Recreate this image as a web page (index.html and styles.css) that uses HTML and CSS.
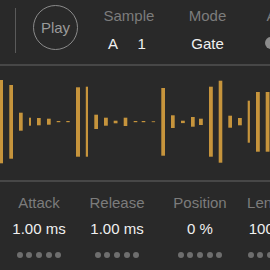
FILE: index.html
```html
<!DOCTYPE html>
<html>
<head>
<meta charset="utf-8">
<link rel="stylesheet" href="styles.css">
</head>
<body>
<div class="app">
  <header class="top">
    <div class="vline"></div>
    <button class="play">Play</button>
    <div class="param sample">
      <div class="label">Sample</div>
      <div class="value pair"><span>A</span><span>1</span></div>
    </div>
    <div class="param mode">
      <div class="label">Mode</div>
      <div class="value">Gate</div>
    </div>
    <div class="param active">
      <div class="label">Active</div>
      <div class="toggle"><span class="knob"></span></div>
    </div>
  </header>
  <div class="divider"></div>
  <svg class="wave" width="270" height="114" viewBox="0 66 270 114" xmlns="http://www.w3.org/2000/svg">
    <g fill="#c6943c">
      <rect x="0" y="80" width="3" height="83.3"/>
      <rect x="9.3" y="85" width="3.7" height="73.7"/>
      <rect x="19" y="112.7" width="3.7" height="18"/>
      <rect x="29" y="117.7" width="2" height="8"/>
      <rect x="37" y="118" width="3.7" height="7.3"/>
      <rect x="47" y="118.7" width="3.7" height="6"/>
      <rect x="56.7" y="121" width="3.6" height="1.2"/>
      <rect x="66.3" y="121" width="3.4" height="1.2"/>
      <rect x="76" y="87.3" width="4" height="69.4"/>
      <rect x="85.8" y="86.7" width="2.2" height="70"/>
      <rect x="94.3" y="114.7" width="3.7" height="14.3"/>
      <rect x="104" y="117.7" width="3.8" height="8"/>
      <rect x="113.7" y="120.7" width="3.8" height="2.6"/>
      <rect x="123.7" y="117.7" width="3.6" height="8.3"/>
      <rect x="133.7" y="121" width="3.6" height="1.2"/>
      <rect x="141.7" y="121" width="3.6" height="1.2"/>
      <rect x="151.7" y="121" width="3.4" height="1.2" opacity="0.7"/>
      <rect x="161.3" y="88" width="3.7" height="67.7"/>
      <rect x="171" y="115.3" width="3.7" height="12.7"/>
      <rect x="181" y="120.7" width="3.8" height="2.4"/>
      <rect x="191" y="117" width="3.7" height="9.7"/>
      <rect x="199" y="118.7" width="3.8" height="6.3"/>
      <rect x="209" y="86.7" width="3.8" height="70"/>
      <rect x="218.7" y="80.7" width="3.6" height="82"/>
      <rect x="228.3" y="115.7" width="3.7" height="12"/>
      <rect x="238" y="118" width="3.8" height="7.3"/>
      <rect x="247.7" y="100.7" width="2.2" height="42"/>
      <rect x="256" y="92" width="3.8" height="59.7"/>
      <rect x="265.7" y="92" width="3.8" height="59.7"/>
    </g>
  </svg>
  <div class="divider"></div>
  <section class="controls">
    <div class="ctl">
      <div class="label">Attack</div>
      <div class="value">1.00 ms</div>
      <div class="dots"><i></i><i></i><i></i><i></i><i></i></div>
    </div>
    <div class="ctl">
      <div class="label">Release</div>
      <div class="value">1.00 ms</div>
      <div class="dots"><i></i><i></i><i></i><i></i><i></i></div>
    </div>
    <div class="ctl">
      <div class="label">Position</div>
      <div class="value">0 %</div>
      <div class="dots"><i></i><i></i><i></i><i></i><i></i></div>
    </div>
    <div class="ctl">
      <div class="label">Length</div>
      <div class="value">100 %</div>
      <div class="dots"><i></i><i></i><i></i><i></i><i></i></div>
    </div>
  </section>
</div>
</body>
</html>
```

FILE: styles.css
```css
* { box-sizing: border-box; }
html, body {
  margin: 0;
  padding: 0;
  background: #292929;
}
body {
  width: 270px;
  height: 270px;
  overflow: hidden;
  font-family: "Liberation Sans", Arial, sans-serif;
  font-size: 15px;
  line-height: 18px;
}
.app {
  width: 270px;
  height: 270px;
  overflow: hidden;
  background: #292929;
}
.top {
  height: 64px;
  display: flex;
  align-items: flex-start;
}
.vline {
  margin-left: 15px;
  margin-top: 8px;
  width: 1px;
  height: 45px;
  background: #5a5a5a;
  flex: none;
}
.play {
  flex: none;
  margin-left: 17px;
  margin-top: 5px;
  width: 45px;
  height: 45px;
  border-radius: 50%;
  border: 1px solid #8a8a8a;
  background: transparent;
  color: #9a9a9a;
  font-family: inherit;
  font-size: 15px;
  padding: 0;
  display: flex;
  align-items: center;
  justify-content: center;
}
.param {
  flex: none;
  margin-top: 6.5px;
  display: flex;
  flex-direction: column;
}
.label {
  color: #7c7c7c;
  white-space: nowrap;
}
.value {
  color: #f0f0f0;
  white-space: nowrap;
}
.sample {
  margin-left: 25.5px;
  width: 62px;
}
.sample .value {
  margin-top: 10.5px;
  display: flex;
  gap: 19.5px;
  padding-left: 4.5px;
}
.mode {
  width: 84px;
  align-items: center;
}
.mode .value { margin-top: 10.5px; }
.active {
  padding-left: 15px;
}
.active .label { padding-left: 2px; }
.toggle {
  margin-top: 12px;
  width: 26px;
  height: 12px;
}
.knob {
  display: block;
  width: 12px;
  height: 12px;
  border-radius: 50%;
  background: #8c8c8c;
}
.divider {
  height: 2px;
  background: #474747;
}
.wave {
  display: block;
  width: 270px;
  height: 114px;
}
.controls {
  display: grid;
  grid-template-columns: 78px 78px 88px 52px;
  padding-top: 11.5px;
}
.ctl {
  justify-self: center;
  display: flex;
  flex-direction: column;
  align-items: center;
}
.ctl .value { margin-top: 8px; }
.dots {
  margin-top: 14.5px;
  display: flex;
  gap: 3.7px;
}
.dots i {
  display: block;
  width: 6px;
  height: 6px;
  border-radius: 50%;
  background: #6e6e6e;
}
```
